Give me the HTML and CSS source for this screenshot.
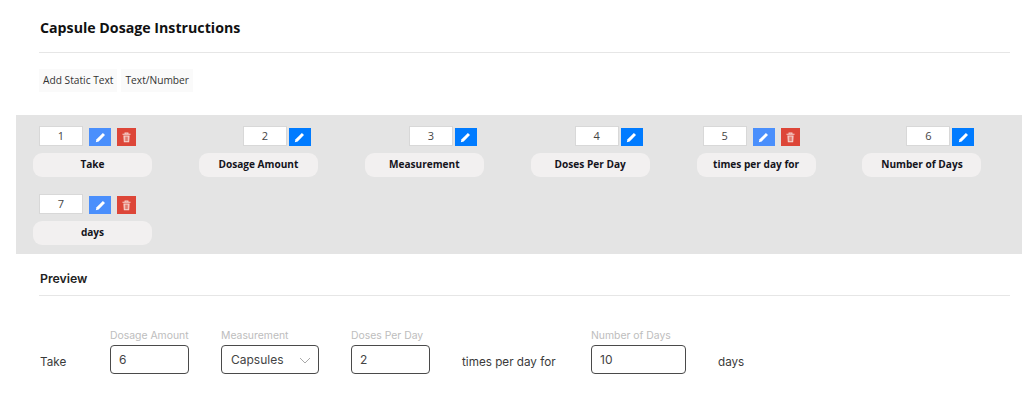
FILE: index.html
```html
<!DOCTYPE html>
<html lang="en">
<head>
<meta charset="utf-8">
<title>Capsule Dosage Instructions</title>
<link rel="stylesheet" href="styles.css">
</head>
<body>
<svg class="defs" width="0" height="0" aria-hidden="true">
  <symbol id="pencil" viewBox="0 0 12 12"><path d="M8.6 1.1 10.9 3.4 4 10.3.9 11.1 1.7 8Z" fill="#fff"/></symbol>
  <symbol id="trash" viewBox="0 0 12 12"><path d="M1.6 2.4H10.4M4.4 2.2V1h3.2v1.2" fill="none" stroke="#f6d5d0" stroke-width="1.1"/><path d="M2.6 3.8H9.4L8.9 11.2H3.1Z" fill="#f6d5d0"/><path d="M4.7 5V10M6 5V10M7.3 5V10" stroke="#d9594a" stroke-width=".8"/></symbol>
</svg>
<header class="head"><h1 class="title">Capsule Dosage Instructions</h1></header>
<div class="chips">
  <span class="chip">Add Static Text</span>
  <span class="chip">Text/Number</span>
</div>
<section class="band">
  <div class="item">
    <div class="controls start"><span class="num">1</span><button class="btn light"><svg class="ico"><use href="#pencil"/></svg></button><button class="btn del"><svg class="ico"><use href="#trash"/></svg></button></div>
    <div class="pill">Take</div>
  </div>
  <div class="item">
    <div class="controls"><span class="num">2</span><button class="btn edit"><svg class="ico"><use href="#pencil"/></svg></button></div>
    <div class="pill">Dosage Amount</div>
  </div>
  <div class="item">
    <div class="controls"><span class="num">3</span><button class="btn edit"><svg class="ico"><use href="#pencil"/></svg></button></div>
    <div class="pill">Measurement</div>
  </div>
  <div class="item">
    <div class="controls"><span class="num">4</span><button class="btn edit"><svg class="ico"><use href="#pencil"/></svg></button></div>
    <div class="pill">Doses Per Day</div>
  </div>
  <div class="item">
    <div class="controls start"><span class="num">5</span><button class="btn light"><svg class="ico"><use href="#pencil"/></svg></button><button class="btn del"><svg class="ico"><use href="#trash"/></svg></button></div>
    <div class="pill">times per day for</div>
  </div>
  <div class="item">
    <div class="controls"><span class="num">6</span><button class="btn edit"><svg class="ico"><use href="#pencil"/></svg></button></div>
    <div class="pill">Number of Days</div>
  </div>
  <div class="item">
    <div class="controls start"><span class="num">7</span><button class="btn light"><svg class="ico"><use href="#pencil"/></svg></button><button class="btn del"><svg class="ico"><use href="#trash"/></svg></button></div>
    <div class="pill">days</div>
  </div>
</section>
<header class="head preview-head"><h2 class="subtitle">Preview</h2></header>
<section class="preview">
  <span class="word w-take">Take</span>
  <div class="field w-a"><label class="cap">Dosage Amount</label><div class="box">6</div></div>
  <div class="field w-b"><label class="cap">Measurement</label><div class="box select">Capsules<svg class="chev" viewBox="0 0 12 7"><path d="M1 1 6 6 11 1" fill="none" stroke="#a9a9a9" stroke-width="1"/></svg></div></div>
  <div class="field w-a"><label class="cap">Doses Per Day</label><div class="box">2</div></div>
  <span class="word w-times">times per day for</span>
  <div class="field w-d"><label class="cap">Number of Days</label><div class="box">10</div></div>
  <span class="word w-days">days</span>
</section>
</body>
</html>
```
FILE: styles.css
```css
* { box-sizing: border-box; }
html, body { margin: 0; padding: 0; }
body { width: 1024px; height: 412px; overflow: hidden; background: #fff; color: #1c1c1c; font-family: "Open Sans", sans-serif; }
.defs { position: absolute; }
.head { margin: 0 14px 0 39px; border-bottom: 1px solid #e6e6e6; }
.title { margin: 0; padding: 18px 0 0 1px; height: 52px; font-size: 14.2px; line-height: 20px; font-weight: 700; color: #111; }
.chips { display: flex; gap: 4px; padding: 16px 0 0 39px; height: 62px; }
.chip { height: 23px; padding: 0 4px; background: #fafafa; font-size: 10.2px; line-height: 23px; color: #333; }
.band { display: grid; grid-template-columns: repeat(6, 119px); column-gap: 46.9px; row-gap: 16px; align-content: start; margin-left: 16px; width: 1006px; height: 139px; padding: 11px 0 0 17px; background: #e4e4e4; }
.item { display: flex; flex-direction: column; height: 52px; }
.controls { display: flex; justify-content: flex-end; align-items: flex-start; height: 27px; padding-right: 7px; }
.controls.start { justify-content: flex-start; padding: 0 0 0 6px; }
.num { width: 44px; height: 20px; border: 1px solid #d8d8d8; background: #fff; font-size: 11px; line-height: 18px; text-align: center; color: #444; }
.btn { display: flex; align-items: center; justify-content: center; height: 18px; margin-top: 2px; padding: 0; border: 0; }
.edit { width: 22px; margin-left: 2px; background: #007bff; }
.light { width: 22px; margin-left: 6px; background: #4a8ffc; }
.del { width: 19px; margin-left: 6px; background: #dd4638; }
.ico { width: 11px; height: 11px; }
.pill { height: 24px; border-radius: 9px; background: #f2f0f0; font-size: 10.1px; font-weight: 700; line-height: 22px; text-align: center; color: #14141c; }
.preview-head { height: 42px; }
.subtitle { margin: 0; padding: 16px 0 0 1px; font-family: "Inter", sans-serif; font-size: 12.3px; line-height: 18px; font-weight: 600; color: #222; }
.preview { display: flex; align-items: flex-start; padding: 33px 0 0 40px; font-family: "Inter", sans-serif; color: #3a3a3a; }
.word { margin-top: 25px; font-size: 11.7px; line-height: 16px; }
.w-take { width: 70px; }
.w-times { width: 129px; }
.w-days { margin-left: 32px; }
.field { display: flex; flex-direction: column; margin-right: 32px; }
.field.w-d { margin-right: 0; }
.w-a { width: 79px; }
.w-b { width: 98px; }
.w-d { width: 95px; }
.cap { height: 16px; font-size: 10.4px; line-height: 14px; color: #bdbdbd; white-space: nowrap; }
.box { position: relative; height: 29px; padding-left: 8px; border: 1px solid #4a4a4a; border-radius: 4px; font-size: 12px; line-height: 27px; color: #444; }
.select { padding-left: 9px; }
.chev { position: absolute; right: 7px; top: 11px; width: 12px; height: 7px; }
```
